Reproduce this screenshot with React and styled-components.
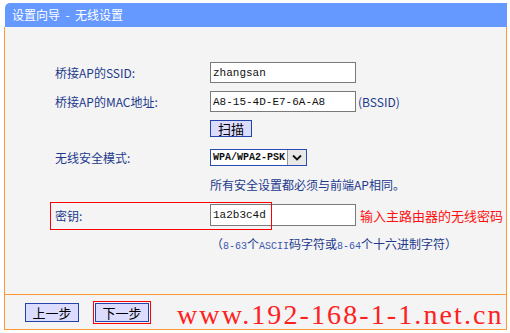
import React from "react";
import styled, { createGlobalStyle } from "styled-components";

const Global = createGlobalStyle`
  html, body { margin: 0; padding: 0; background: #ffffff; }
  body {
    font-family: "Noto Sans CJK SC", "Liberation Sans", sans-serif;
    font-size: 12px;
  }
`;

const Frame = styled.div`
  margin: 3px 0 0 4px;
  width: 503px;
`;

const Header = styled.div`
  margin-left: 1px;
  height: 24px;
  background: #6699ff;
  border-top-left-radius: 5px;
  color: #ffffff;
  font-size: 12px;
  line-height: 24px;
  padding-left: 7px;
  white-space: pre;
`;

const Body = styled.div`
  position: relative;
  border: 1px solid #ff9933;
  border-top: none;
  background: #f4f4f4;
`;

const Form = styled.div`
  height: 232px;
  padding: 35px 0 0 50px;
  border-bottom: 1px solid #ff9933;
`;

const Row = styled.div`
  position: relative;
  display: grid;
  grid-template-columns: 155px auto;
  align-items: center;
  height: ${(p) => p.$h}px;
  margin-bottom: ${(p) => p.$mb}px;
`;

const Label = styled.div`
  color: #1c3a8c;
  font-size: 12px;
  white-space: nowrap;
`;

const Field = styled.div`
  display: flex;
  align-items: center;
  white-space: nowrap;
`;

const TextInput = styled.input`
  box-sizing: border-box;
  width: 146px;
  height: ${(p) => p.$h}px;
  border: 1px solid #7a7a7a;
  background: #ffffff;
  padding: 0 2px;
  margin: 0;
  font-family: "Liberation Mono", monospace;
  font-size: 11px;
  color: #111;
  outline: none;
`;

const Note = styled.span`
  color: #1c3a8c;
  font-size: 12px;
  margin-left: 2px;
`;

const Small = styled.span`
  font-family: "Liberation Mono", monospace;
  font-size: 10px;
  color: #3a58b0;
`;

const Button = styled.button`
  box-sizing: border-box;
  width: ${(p) => p.$w}px;
  height: ${(p) => p.$h}px;
  margin: 0;
  padding: 0;
  background: #dcdcff;
  border: 1px solid #2244aa;
  color: #000;
  font-family: "Noto Sans CJK SC", sans-serif;
  font-size: 13px;
  line-height: 1;
`;

const Select = styled.div`
  box-sizing: border-box;
  width: 97px;
  height: 17px;
  border: 1px solid #2a4bb0;
  background: #ffffff;
  display: flex;
  align-items: stretch;
`;

const SelectText = styled.div`
  flex: 1;
  font-family: "Liberation Mono", monospace;
  font-weight: bold;
  font-size: 10px;
  line-height: 15px;
  padding-left: 2px;
  color: #111;
`;

const Arrow = styled.div`
  width: 18px;
  background: #e8e8e8;
  border-left: 1px solid #9a9a9a;
  display: flex;
  align-items: center;
  justify-content: center;
`;

const Info = styled.div`
  grid-column: 2;
  color: #1c3a8c;
  font-size: 12px;
  white-space: nowrap;
`;

const Hint = styled.div`
  grid-column: 2;
  color: #1c3a8c;
  font-size: 12px;
  padding-left: 1px;
  white-space: nowrap;
`;

const RedNote = styled.span`
  color: #ff1010;
  font-size: 13px;
  margin-left: 4px;
`;

const Callout = styled.div`
  position: absolute;
  box-sizing: border-box;
  left: -5px;
  top: -2px;
  width: 222px;
  height: 28px;
  border: 1px solid #ff0000;
  pointer-events: none;
`;

const Footer = styled.div`
  position: relative;
  height: 34px;
  display: flex;
  align-items: center;
  padding-left: 20px;
  gap: 14px;
`;

const Marked = styled.div`
  border: 1px solid #ff0000;
  padding: 1px;
  display: flex;
`;

const Watermark = styled.div`
  position: absolute;
  left: 172px;
  top: 6px;
  font-family: "Liberation Serif", serif;
  font-size: 28px;
  line-height: 28px;
  letter-spacing: 2.1px;
  color: #ff2020;
  white-space: nowrap;
  pointer-events: none;
`;

export default function App() {
  return (
    <>
      <Global />
      <Frame>
        <Header>{"设置向导  -  无线设置"}</Header>
        <Body>
          <Form>
            <Row $h={21} $mb={8}>
              <Label>桥接AP的SSID:</Label>
              <Field>
                <TextInput $h={21} readOnly defaultValue="zhangsan" />
              </Field>
            </Row>
            <Row $h={21} $mb={8}>
              <Label>桥接AP的MAC地址:</Label>
              <Field>
                <TextInput $h={21} readOnly defaultValue="A8-15-4D-E7-6A-A8" />
                <Note>(BSSID)</Note>
              </Field>
            </Row>
            <Row $h={17} $mb={12}>
              <span />
              <Field>
                <Button $w={42} $h={17}>扫描</Button>
              </Field>
            </Row>
            <Row $h={17} $mb={9}>
              <Label>无线安全模式:</Label>
              <Field>
                <Select>
                  <SelectText>WPA/WPA2-PSK</SelectText>
                  <Arrow>
                    <svg width="10" height="7" viewBox="0 0 10 7">
                      <path d="M1 1.5 L5 5.5 L9 1.5" fill="none" stroke="#111" strokeWidth="1.8" />
                    </svg>
                  </Arrow>
                </Select>
              </Field>
            </Row>
            <Row $h={18} $mb={11}>
              <Info>所有安全设置都必须与前端AP相同。</Info>
            </Row>
            <Row $h={22} $mb={9}>
              <Label>密钥:</Label>
              <Field>
                <TextInput $h={22} readOnly defaultValue="1a2b3c4d" />
                <RedNote>输入主路由器的无线密码</RedNote>
              </Field>
              <Callout />
            </Row>
            <Row $h={16} $mb={0}>
              <Hint>（<Small>8-63</Small>个<Small>ASCII</Small>码字符或<Small>8-64</Small>个十六进制字符）</Hint>
            </Row>
          </Form>
          <Footer>
            <Button $w={54} $h={19}>上一步</Button>
            <Marked>
              <Button $w={54} $h={19}>下一步</Button>
            </Marked>
            <Watermark>www.192-168-1-1.net.cn</Watermark>
          </Footer>
        </Body>
      </Frame>
    </>
  );
}
